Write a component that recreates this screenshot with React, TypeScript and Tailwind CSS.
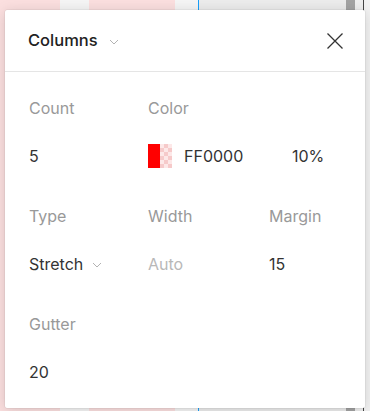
import React from "react";

const Chevron = ({ className }: { className?: string }) => (
  <svg width="10" height="6" viewBox="0 0 10 6" className={className} fill="none">
    <path d="M1 1l4 4 4-4" stroke="currentColor" strokeWidth="1" />
  </svg>
);

const Label = ({ children }: { children: React.ReactNode }) => (
  <div className="h-6 leading-6 text-[16px] text-[#999999]">{children}</div>
);

export default function App() {
  return (
    <div className="relative h-[411px] w-[370px] overflow-hidden bg-white font-['Inter',sans-serif]">
      {/* canvas behind the popover */}
      <div className="flex h-full">
        <div className="w-[60px] bg-[#fbdfdf]" />
        <div className="w-[29px] bg-[#f5f5f5]" />
        <div className="w-[86px] bg-[#fbdfdf]" />
        <div className="w-[23px] bg-[#f5f5f5]" />
        <div className="w-px bg-[#18a0fb]" />
        <div className="w-[147px] bg-[#ececec]" />
        <div className="w-[9px] bg-[#a3a3a3]" />
        <div className="w-[8px] bg-[#eeeeee]" />
        <div className="w-px bg-[#444444]" />
        <div className="flex-1 bg-[#f2f2f2]" />
      </div>

      {/* popover */}
      <div className="absolute left-[5px] top-[10px] w-[360px] h-[398px] rounded-[2px] bg-white shadow-[0_2px_14px_rgba(0,0,0,0.15),0_0_0_0.5px_rgba(0,0,0,0.08)]">
        <div className="flex h-[62px] items-center justify-between border-b border-[#e5e5e5] pl-[23px] pr-[21px]">
          <div className="flex items-center gap-[11px]">
            <span className="text-[16.5px] font-medium text-[#222222]">Columns</span>
            <Chevron className="text-[#b3b3b3] mt-[2px]" />
          </div>
          <svg width="18" height="18" viewBox="0 0 18 18" fill="none" className="text-[#333333]">
            <path d="M1.5 1.5l15 15M16.5 1.5l-15 15" stroke="currentColor" strokeWidth="1.3" />
          </svg>
        </div>

        <div className="grid grid-cols-[119px_121px_1fr] gap-y-6 pl-6 pt-6 text-[16px] text-[#333333]">
          <div className="flex flex-col gap-6">
            <Label>Count</Label>
            <div className="h-6 leading-6">5</div>
          </div>
          <div className="col-span-2 flex flex-col gap-6">
            <Label>Color</Label>
            <div className="flex h-6 items-center">
              <div className="flex h-6 w-6">
                <div className="h-6 w-3 bg-[#ff0000]" />
                <div className="h-6 w-3 bg-[linear-gradient(45deg,#f6caca_25%,transparent_25%,transparent_75%,#f6caca_75%),linear-gradient(45deg,#f6caca_25%,#fde8e8_25%,#fde8e8_75%,#f6caca_75%)] bg-[length:8px_8px] bg-[position:0_0,4px_4px]" />
              </div>
              <span className="ml-3 w-[108px]">FF0000</span>
              <span>10%</span>
            </div>
          </div>

          <div className="mt-3 flex flex-col gap-6">
            <Label>Type</Label>
            <div className="flex h-6 items-center gap-[9px]">
              <span>Stretch</span>
              <Chevron className="text-[#b3b3b3] mt-[1px]" />
            </div>
          </div>
          <div className="mt-3 flex flex-col gap-6">
            <Label>Width</Label>
            <div className="h-6 leading-6 text-[#b8b8b8]">Auto</div>
          </div>
          <div className="mt-3 flex flex-col gap-6">
            <Label>Margin</Label>
            <div className="h-6 leading-6">15</div>
          </div>

          <div className="mt-3 flex flex-col gap-6">
            <Label>Gutter</Label>
            <div className="h-6 leading-6">20</div>
          </div>
        </div>
      </div>
    </div>
  );
}
